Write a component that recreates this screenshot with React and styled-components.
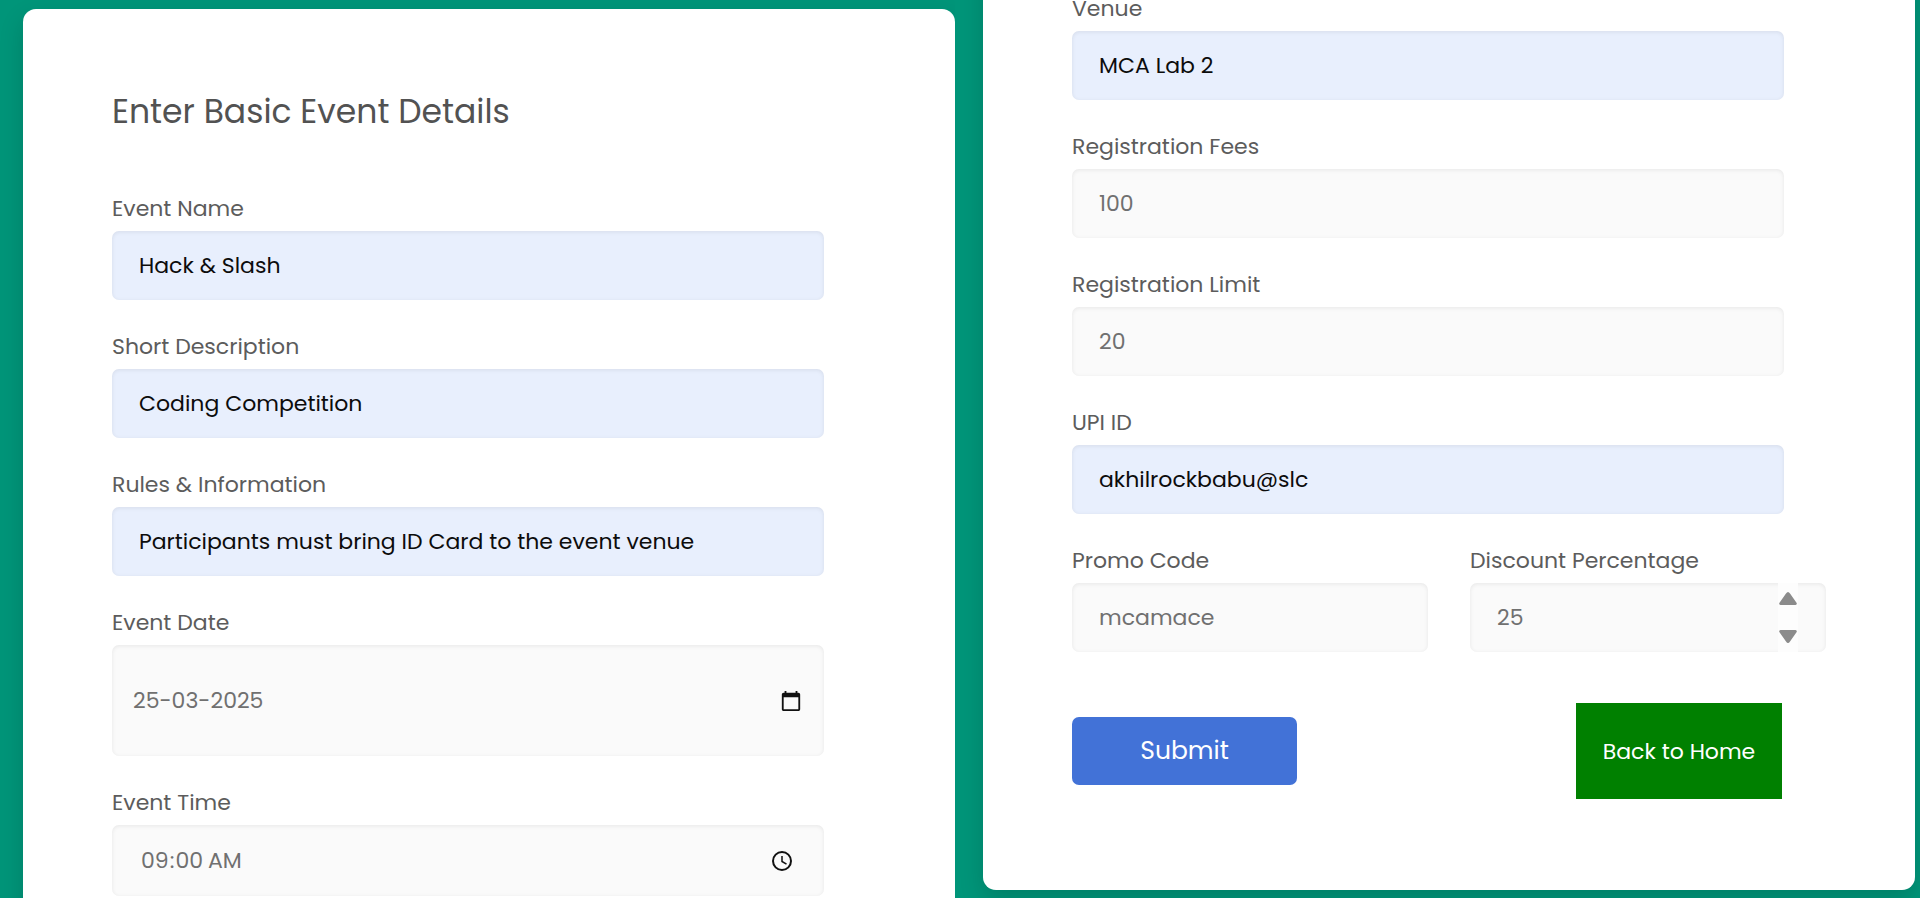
import React from "react";
import styled, { createGlobalStyle } from "styled-components";

const GlobalStyle = createGlobalStyle`
  *, *::before, *::after { box-sizing: border-box; }
  body { margin: 0; background: #009579; }
  body, input, button { font-family: Poppins, Inter, "Open Sans", sans-serif; }
`;

const Page = styled.main`
  display: grid;
  grid-template-columns: 955fr 965fr;
  height: 100vh;
`;

const Panel = styled.section`
  display: flex;
  flex-direction: column;
  justify-content: ${(p) => (p.$end ? "flex-end" : "flex-start")};
  min-width: 0;
  padding: ${(p) => (p.$end ? "0 5px 8px 28px" : "9px 0 0 23px")};
  overflow: hidden;
  background: #009579;
`;

const Card = styled.form`
  flex: 1 0 auto;
  padding: 79px 131px 91px 89px;
  border-radius: 13px;
  background: #fff;
  box-shadow: 0 10px 25px rgba(0, 0, 0, 0.15);
`;

const Title = styled.h1`
  margin: 0 0 64px;
  color: #525252;
  font-size: 33px;
  font-weight: 400;
  line-height: 48px;
`;

const Fields = styled.div`
  display: flex;
  flex-direction: column;
  gap: 38px;
`;

const FieldBox = styled.div`
  min-width: 0;
`;

const Label = styled.label`
  display: block;
  margin-bottom: 13px;
  color: #5c5c5c;
  font-size: 22px;
  line-height: 18px;
  white-space: nowrap;
`;

const heights = { normal: 69, time: 71, date: 111 };
const insets = { normal: "0 28px 0 27px", time: "0 30px 0 28px", date: "0 22px 0 21px" };

const Shell = styled.div`
  display: flex;
  align-items: center;
  height: ${(p) => heights[p.$size]}px;
  padding: ${(p) => insets[p.$size]};
  border-radius: 7px;
  background: ${(p) => (p.$filled ? "#e8effd" : "#fafafa")};
  box-shadow: inset 0 1px 4px rgba(0, 0, 0, 0.08);
`;

const Input = styled.input`
  flex: 1;
  min-width: 0;
  height: 100%;
  padding: 0;
  border: 0;
  outline: 0;
  background: transparent;
  color: ${(p) => (p.$filled ? "#0c0c0c" : "#707070")};
  font-size: 22px;
  appearance: textfield;

  &::-webkit-calendar-picker-indicator,
  &::-webkit-inner-spin-button {
    display: none;
  }
`;

const IconButton = styled.button`
  display: flex;
  padding: 0;
  border: 0;
  background: transparent;
  color: #111;
`;

const Spinner = styled.div`
  display: flex;
  flex-direction: column;
  justify-content: center;
  gap: 25px;
  width: 20px;
  height: 100%;
  background: #fdfdfd;
`;

const StepButton = styled(IconButton)`
  justify-content: center;
  color: #8b8b8b;
`;

const Split = styled.div`
  display: grid;
  grid-template-columns: 1fr 1fr;
  gap: 42px;
  margin-right: -42px;
`;

const Actions = styled.div`
  display: flex;
  align-items: center;
  justify-content: space-between;
  margin-top: 51px;
  padding-right: 2px;
`;

const Submit = styled.button`
  width: 225px;
  height: 68px;
  border: 0;
  border-radius: 7px;
  background: #4272d7;
  color: #fff;
  font-size: 25px;
`;

const Back = styled.a`
  display: flex;
  align-items: center;
  justify-content: center;
  width: 206px;
  height: 96px;
  background: #008000;
  color: #fff;
  font-size: 22px;
  text-decoration: none;
  white-space: nowrap;
`;

function Field({ id, label, value, filled, size = "normal", type = "text", children }) {
  return (
    <FieldBox>
      <Label htmlFor={id}>{label}</Label>
      <Shell $size={size} $filled={filled}>
        <Input id={id} name={id} type={type} defaultValue={value} $filled={filled} autoComplete="off" />
        {children}
      </Shell>
    </FieldBox>
  );
}

const CalendarIcon = () => (
  <svg width="22" height="22" viewBox="0 0 24 24" fill="currentColor" aria-hidden="true">
    <path d="M20 3h-1V1h-2v2H7V1H5v2H4c-1.1 0-2 .9-2 2v16c0 1.1.9 2 2 2h16c1.1 0 2-.9 2-2V5c0-1.1-.9-2-2-2zm0 18H4V8h16v13z" />
  </svg>
);

const ClockIcon = () => (
  <svg width="24" height="24" viewBox="0 0 24 24" fill="none" stroke="currentColor" aria-hidden="true">
    <circle cx="12" cy="12" r="9" strokeWidth="2" />
    <path d="M12 7v5.5l4.5 2.7" strokeWidth="1.5" />
  </svg>
);

const Triangle = ({ down }) => (
  <svg width="18" height="13" viewBox="0 0 18 13" fill="currentColor" aria-hidden="true">
    <path
      d={
        down
          ? "M1.5 0h15Q18.5.3 17.5 2.3L11 11.5Q9 14.5 7 11.5L.5 2.3Q-.5.3 1.5 0z"
          : "M1.5 13h15Q18.5 12.7 17.5 10.7L11 1.5Q9-1.5 7 1.5L.5 10.7Q-.5 12.7 1.5 13z"
      }
    />
  </svg>
);

export default function App() {
  return (
    <>
      <GlobalStyle />
      <Page>
        <Panel>
          <Card onSubmit={(e) => e.preventDefault()}>
            <Title>Enter Basic Event Details</Title>
            <Fields>
              <Field id="name" label="Event Name" value="Hack & Slash" filled />
              <Field id="description" label="Short Description" value="Coding Competition" filled />
              <Field
                id="rules"
                label="Rules & Information"
                value="Participants must bring ID Card to the event venue"
                filled
              />
              <Field id="date" label="Event Date" value="25-03-2025" size="date">
                <IconButton type="button" aria-label="Choose date">
                  <CalendarIcon />
                </IconButton>
              </Field>
              <Field id="time" label="Event Time" value="09:00" type="time" size="time">
                <IconButton type="button" aria-label="Choose time">
                  <ClockIcon />
                </IconButton>
              </Field>
            </Fields>
          </Card>
        </Panel>
        <Panel $end>
          <Card id="registration" onSubmit={(e) => e.preventDefault()}>
            <Fields>
              <Field id="venue" label="Venue" value="MCA Lab 2" filled />
              <Field id="fees" label="Registration Fees" value="100" />
              <Field id="limit" label="Registration Limit" value="20" />
              <Field id="upi" label="UPI ID" value="akhilrockbabu@slc" filled />
              <Split>
                <Field id="promo" label="Promo Code" value="mcamace" />
                <Field id="discount" label="Discount Percentage" value="25" type="number">
                  <Spinner>
                    <StepButton type="button" aria-label="Increase">
                      <Triangle />
                    </StepButton>
                    <StepButton type="button" aria-label="Decrease">
                      <Triangle down />
                    </StepButton>
                  </Spinner>
                </Field>
              </Split>
            </Fields>
            <Actions>
              <Submit type="submit">Submit</Submit>
              <Back href="#home">Back to Home</Back>
            </Actions>
          </Card>
        </Panel>
      </Page>
    </>
  );
}
